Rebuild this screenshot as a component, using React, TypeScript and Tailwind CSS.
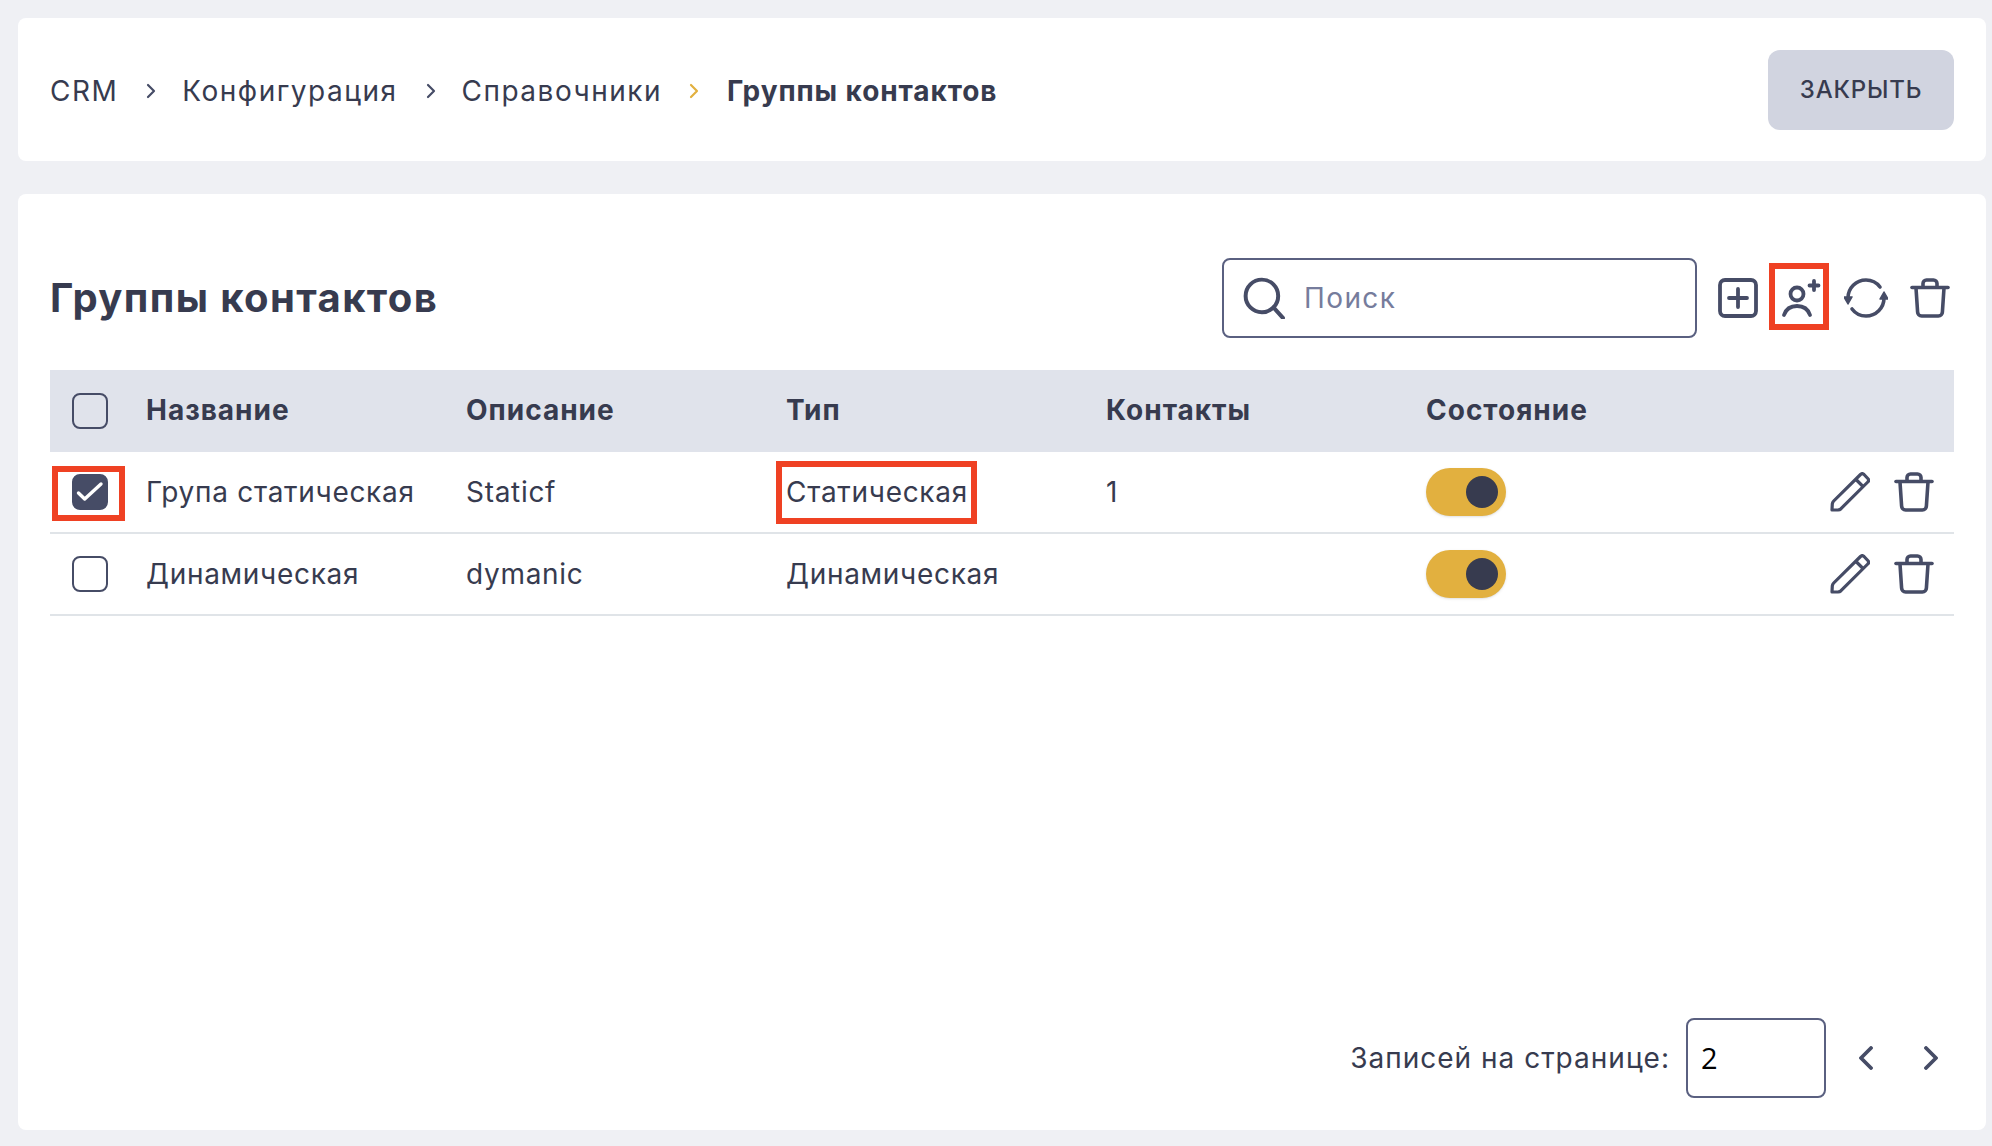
import React from 'react';

const rows = [
  { name: 'Група статическая', desc: 'Staticf', type: 'Статическая', count: '1', checked: true },
  { name: 'Динамическая', desc: 'dymanic', type: 'Динамическая', count: '', checked: false },
];

const TrashIcon = () => (
  <svg viewBox="0 0 40 40" className="w-[40px] h-[40px] shrink-0" fill="none" stroke="#464c66" strokeWidth="3.6" strokeLinecap="round" strokeLinejoin="round">
    <path d="M2 9.5h36" />
    <path d="M13 9V5.500a3.500 3.500 0 0 1 3.500-3.500h7a3.500 3.500 0 0 1 3.500 3.500V9" />
    <path d="M6 10l1.600 24a4 4 0 0 0 4 4h16.800a4 4 0 0 0 4-4L34 10" />
  </svg>
);

const PencilIcon = () => (
  <svg viewBox="0 0 40 40" className="w-[40px] h-[40px] shrink-0" fill="none" stroke="#464c66" strokeWidth="3.2" strokeLinecap="round" strokeLinejoin="round">
    <path d="M2 38l.3-6a5 5 0 0 1 1.400-3L30.500 2.500a2.500 2.500 0 0 1 3.500 0l3.800 4a2.500 2.500 0 0 1 0 3.500L11 36.700a5 5 0 0 1-3 1.300z" />
    <path d="M26.500 8l6 6" />
  </svg>
);

const Toggle = () => (
  <div className="w-[80px] h-[48px] rounded-full bg-[#e2b03f] flex items-center justify-end pr-[8px] shadow-sm">
    <div className="w-[32px] h-[32px] rounded-full bg-[#373b4f]" />
  </div>
);

const Checkbox = ({ checked }: { checked?: boolean }) => (
  <div
    className={`w-[36px] h-[36px] rounded-[8px] border-2 border-[#464c66] flex items-center justify-center ${
      checked ? 'bg-[#464c66]' : ''
    }`}
  >
    {checked && (
      <svg viewBox="0 0 32 32" className="w-[32px] h-[32px]" fill="none" stroke="#ffffff" strokeWidth="3.4" strokeLinecap="round" strokeLinejoin="round">
        <path d="M4.500 17l6.200 6L27 8" />
      </svg>
    )}
  </div>
);

const Crumb = ({ gold }: { gold?: boolean }) => (
  <svg viewBox="0 0 10 16" className="w-[10px] h-[16px]" fill="none" stroke={gold ? '#e2b03f' : '#464c66'} strokeWidth="2.200" strokeLinecap="round" strokeLinejoin="round">
    <path d="M2 2l6 6-6 6" />
  </svg>
);

const App = () => {
  return (
    <div className="w-[1992px] h-[1146px] bg-[#eff0f4] pl-[18px] pr-[6px] pt-[18px] flex flex-col gap-[33px] text-[#373b4f] overflow-hidden font-['Inter',sans-serif]">
      {/* Breadcrumbs */}
      <div className="h-[143px] bg-white rounded-[8px] pl-[32px] pr-[32px] flex items-center justify-between">
        <div className="flex items-center text-[28px] tracking-[1.5px] pt-[2px]">
          <span>CRM</span>
          <span className="ml-[28px] mr-[26px]"><Crumb /></span>
          <span>Конфигурация</span>
          <span className="ml-[28px] mr-[26px]"><Crumb /></span>
          <span>Справочники</span>
          <span className="ml-[27px] mr-[28px]"><Crumb gold /></span>
          <span className="font-bold tracking-[0.9px]">Группы контактов</span>
        </div>
        <button className="w-[186px] h-[80px] rounded-[12px] bg-[#d1d4e0] text-[24px] font-medium tracking-[0.8px]">ЗАКРЫТЬ</button>
      </div>

      {/* Main card */}
      <div className="h-[936px] bg-white rounded-[8px] pl-[32px] pr-[32px] pt-[64px] pb-[32px] flex flex-col">
        <div className="h-[80px] flex items-center">
          <h1 className="text-[40px] font-bold tracking-[1.4px]">Группы контактов</h1>
          <div className="ml-auto w-[475px] h-[80px] rounded-[8px] border-2 border-[#5a6080] flex items-center pl-[19px]">
            <svg viewBox="0 0 40 40" className="w-[42px] h-[42px]" fill="none" stroke="#464c66" strokeWidth="3.800" strokeLinecap="round">
              <circle cx="18" cy="18" r="15.500" />
              <path d="M29 29l9 10" />
            </svg>
            <span className="ml-[19px] text-[28px] tracking-[1.4px] text-[#767c9c]">Поиск</span>
          </div>
          <svg viewBox="0 0 40 40" className="ml-[21px] w-[40px] h-[40px]" fill="none" stroke="#464c66" strokeWidth="3.800" strokeLinecap="round">
            <rect x="2" y="2" width="36" height="36" rx="5" />
            <path d="M20 11v18M11 20h18" />
          </svg>
          <div className="relative ml-[22px] w-[44px] h-[40px]">
            <svg viewBox="0 0 44 40" className="w-[44px] h-[40px]" fill="none" stroke="#464c66" strokeWidth="3.800" strokeLinecap="round">
              <circle cx="17" cy="16" r="6.500" />
              <path d="M4 37c2-6 7-9 13-9s11 3 13 9" />
              <path d="M34 12V3M29.500 7.500h9" />
            </svg>
            <div className="absolute left-[-11px] top-[-15px] w-[60px] h-[67px] border-[6px] border-[#ef4123]" />
          </div>
          <svg viewBox="0 0 44 40" className="ml-[20px] w-[44px] h-[40px]" fill="none" stroke="#464c66" strokeWidth="3.600" strokeLinecap="round">
            <path d="M4 20C4 10 12 2 22 2c6 0 11 3 14 7" />
            <path d="M40 20c0 10-8 18-18 18-6 0-11-3-14-7" />
            <path d="M0 19l4 7 4-7z" fill="#464c66" strokeWidth="1.500" strokeLinejoin="round" />
            <path d="M36 21l4-7 4 7z" fill="#464c66" strokeWidth="1.500" strokeLinejoin="round" />
          </svg>
          <span className="ml-[22px] mr-[4px]"><TrashIcon /></span>
        </div>

        {/* Table */}
        <div className="mt-[32px] h-[82px] bg-[#e0e3eb] grid grid-cols-[96px_320px_320px_320px_320px_1fr] items-center text-[28px] font-bold tracking-[1px]">
          <div className="pl-[22px]"><Checkbox /></div>
          <div className="pb-[2px]">Название</div>
          <div className="pb-[2px]">Описание</div>
          <div className="pb-[2px]">Тип</div>
          <div className="pb-[2px]">Контакты</div>
          <div className="pb-[2px]">Состояние</div>
        </div>
        {rows.map((row) => (
          <div key={row.name} className="h-[82px] border-b-2 border-[#e0e4e8] grid grid-cols-[96px_320px_320px_320px_320px_1fr] items-center text-[28px] tracking-[0.7px]">
            <div className="pl-[22px] relative">
              <Checkbox checked={row.checked} />
              {row.checked && <div className="absolute left-[2px] top-[-8px] w-[73px] h-[55px] border-[6px] border-[#ef4123]" />}
            </div>
            <div>{row.name}</div>
            <div>{row.desc}</div>
            <div className="relative">
              {row.type}
              {row.checked && <div className="absolute left-[-10px] top-[-10px] w-[201px] h-[63px] border-[6px] border-[#ef4123]" />}
            </div>
            <div>{row.count}</div>
            <div className="flex items-center">
              <Toggle />
              <div className="ml-auto mr-[20px] flex items-center gap-[24px]">
                <PencilIcon />
                <TrashIcon />
              </div>
            </div>
          </div>
        ))}

        {/* Pagination */}
        <div className="mt-auto h-[80px] flex items-center justify-end">
          <span className="text-[28px] tracking-[1px]">Записей на странице:</span>
          <div className="ml-[16px] w-[140px] h-[80px] rounded-[8px] border-2 border-[#5a6080] flex items-center pl-[13px] text-[29px] text-black font-['Open_Sans',sans-serif]">2</div>
          <svg viewBox="0 0 14 24" className="ml-[33px] w-[14px] h-[24px]" fill="none" stroke="#464c66" strokeWidth="3.800" strokeLinecap="round" strokeLinejoin="round">
            <path d="M12 2L2 12l10 10" />
          </svg>
          <svg viewBox="0 0 14 24" className="ml-[51px] mr-[16px] w-[14px] h-[24px]" fill="none" stroke="#464c66" strokeWidth="3.800" strokeLinecap="round" strokeLinejoin="round">
            <path d="M2 2l10 10L2 22" />
          </svg>
        </div>
      </div>
    </div>
  );
};

export default App;
